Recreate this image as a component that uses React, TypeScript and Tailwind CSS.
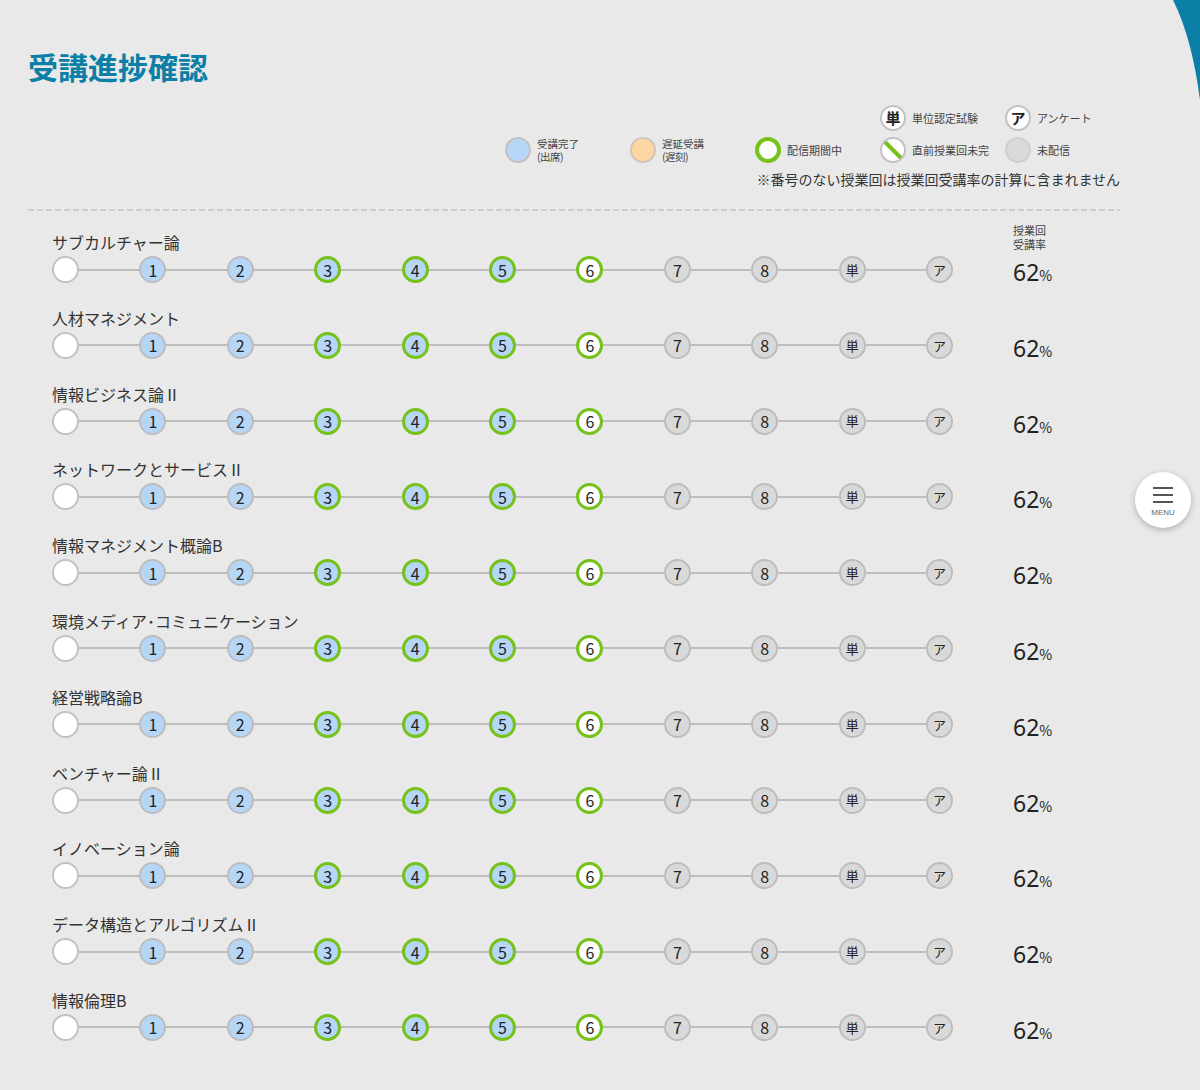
import React from 'react';

type NodeKind = 'start' | 'done' | 'doneLive' | 'live' | 'none';

interface Node {
  label: string;
  kind: NodeKind;
}

const courses = [
  'サブカルチャー論',
  '人材マネジメント',
  '情報ビジネス論Ⅱ',
  'ネットワークとサービスⅡ',
  '情報マネジメント概論B',
  '環境メディア･コミュニケーション',
  '経営戦略論B',
  'ベンチャー論Ⅱ',
  'イノベーション論',
  'データ構造とアルゴリズムⅡ',
  '情報倫理B',
];

const nodes: Node[] = [
  { label: '', kind: 'start' },
  { label: '1', kind: 'done' },
  { label: '2', kind: 'done' },
  { label: '3', kind: 'doneLive' },
  { label: '4', kind: 'doneLive' },
  { label: '5', kind: 'doneLive' },
  { label: '6', kind: 'live' },
  { label: '7', kind: 'none' },
  { label: '8', kind: 'none' },
  { label: '単', kind: 'none' },
  { label: 'ア', kind: 'none' },
];

const nodeClass: Record<NodeKind, string> = {
  start: 'bg-white border-2 border-[#c2c2c2]',
  done: 'bg-[#b5d6f7] border-2 border-[#bdbdbd]',
  doneLive: 'bg-[#b5d6f7] border-[3px] border-[#76c21a]',
  live: 'bg-white border-[3px] border-[#76c21a]',
  none: 'bg-[#d9d9d9] border-2 border-[#bdbdbd]',
};

const Circle: React.FC<{ node: Node }> = ({ node }) => {
  const small = node.label === '単' || node.label === 'ア';
  return (
    <div
      className={`w-[27px] h-[27px] shrink-0 rounded-full flex items-center justify-center text-[#222] ${nodeClass[node.kind]} ${
        small ? 'text-[13px]' : 'text-[16px]'
      }`}
    >
      {node.label}
    </div>
  );
};

const LegendDot: React.FC<{ className: string; children?: React.ReactNode }> = ({ className, children }) => (
  <div className={`w-[26px] h-[26px] shrink-0 rounded-full flex items-center justify-center ${className}`}>{children}</div>
);

const LegendItem: React.FC<{ dot: React.ReactNode; label: React.ReactNode }> = ({ dot, label }) => (
  <div className="flex items-center gap-[6px]">
    {dot}
    <div className="text-[11px] leading-[12px] text-[#444]">{label}</div>
  </div>
);

const TwoLine: React.FC<{ top: string; bottom: string }> = ({ top, bottom }) => (
  <div className="flex flex-col gap-[1px] text-[10.5px] leading-[12px]">
    <span>{top}</span>
    <span className="tracking-[-0.5px]">{bottom}</span>
  </div>
);

export default function App() {
  return (
    <div
      className="relative min-h-[1090px] w-[1200px] bg-[#e9e9e9] overflow-hidden"
      style={{ fontFamily: '"Noto Sans CJK JP", "Noto Sans", sans-serif' }}
    >
      {/* top-right decoration */}
      <svg className="absolute top-0 right-0" width="40" height="110" viewBox="0 0 40 110">
        <path d="M13 0 Q32 38 40 100 L40 0 Z" fill="#0b7fa6" />
      </svg>

      {/* menu button */}
      <div className="absolute left-[1135px] top-[472px] w-[56px] h-[56px] rounded-full bg-white shadow-[0_2px_6px_rgba(0,0,0,0.25)] flex flex-col items-center justify-center">
        <div className="flex flex-col gap-[5px] mt-[3px]">
          <span className="block w-[20px] h-[2px] bg-[#555]" />
          <span className="block w-[20px] h-[2px] bg-[#555]" />
          <span className="block w-[20px] h-[2px] bg-[#555]" />
        </div>
        <span className="text-[8px] leading-[8px] mt-[6px] text-[#666]" style={{ fontFamily: '"Liberation Sans", sans-serif' }}>
          MENU
        </span>
      </div>

      <div className="pl-[28px] pt-[48px] w-[1120px]">
        <h1 className="text-[30px] leading-[36px] font-bold text-[#0b7fa6]">受講進捗確認</h1>

        {/* legend */}
        <div className="mt-[21px] pl-[477px]">
          <div className="grid grid-cols-[125px_125px_125px_125px_125px] gap-y-[6px]">
            <div />
            <div />
            <div />
            <LegendItem
              dot={
                <LegendDot className="bg-white border-2 border-[#c2c2c2] text-[15px] font-bold text-[#222]">単</LegendDot>
              }
              label="単位認定試験"
            />
            <LegendItem
              dot={
                <LegendDot className="bg-white border-2 border-[#c2c2c2] text-[15px] font-bold text-[#222]">ア</LegendDot>
              }
              label="アンケート"
            />
            <LegendItem
              dot={<LegendDot className="bg-[#b5d6f7] border-2 border-[#c2c2c2]" />}
              label={<TwoLine top="受講完了" bottom="(出席)" />}
            />
            <LegendItem
              dot={<LegendDot className="bg-[#fdd7a3] border-2 border-[#cfc6b8]" />}
              label={<TwoLine top="遅延受講" bottom="(遅刻)" />}
            />
            <LegendItem dot={<LegendDot className="bg-white border-[4px] border-[#76c21a]" />} label="配信期間中" />
            <LegendItem
              dot={
                <svg width="26" height="26" viewBox="0 0 26 26" className="shrink-0">
                  <defs>
                    <clipPath id="c">
                      <circle cx="13" cy="13" r="12" />
                    </clipPath>
                  </defs>
                  <circle cx="13" cy="13" r="12" fill="#fff" />
                  <line x1="3" y1="3" x2="23" y2="23" stroke="#76c21a" strokeWidth="4" clipPath="url(#c)" />
                  <circle cx="13" cy="13" r="12" fill="none" stroke="#c2c2c2" strokeWidth="2" />
                </svg>
              }
              label="直前授業回未完"
            />
            <LegendItem dot={<LegendDot className="bg-[#d9d9d9] border-2 border-[#cfcfcf]" />} label="未配信" />
          </div>
        </div>
        <p className="mt-[6px] text-right text-[14px] leading-[20px] text-[#333]">
          ※番号のない授業回は授業回受講率の計算に含まれません
        </p>

        <div className="mt-[20px] h-[2px] bg-[repeating-linear-gradient(90deg,#cdcdcd_0_6px,transparent_6px_9px)]" />

        {/* courses */}
        <div className="mt-[20px] pl-[24px] flex flex-col gap-[23.8px]">
          {courses.map((name, i) => (
            <div key={name}>
              <div className="relative h-[22px]">
                <div className="text-[16px] leading-[22px] text-[#333]">{name}</div>
                {i === 0 && (
                  <div className="absolute left-[961px] top-[-8px] text-[11px] leading-[14px] text-[#444]">
                    授業回
                    <br />
                    受講率
                  </div>
                )}
              </div>
              <div className="mt-[3px] h-[27px] flex items-center">
                <div className="w-[901px] flex items-center">
                  {nodes.map((n, j) => (
                    <React.Fragment key={j}>
                      {j > 0 && <div className="flex-1 h-[2px] bg-[#bdbdbd]" />}
                      <Circle node={n} />
                    </React.Fragment>
                  ))}
                </div>
                <div className="ml-[60px] mt-[6px] text-[#222] flex items-baseline leading-none">
                  <span className="text-[23px]" style={{ fontFamily: '"Noto Sans", sans-serif' }}>
                    62
                  </span>
                  <span className="text-[14px]">%</span>
                </div>
              </div>
            </div>
          ))}
        </div>
      </div>
    </div>
  );
}
